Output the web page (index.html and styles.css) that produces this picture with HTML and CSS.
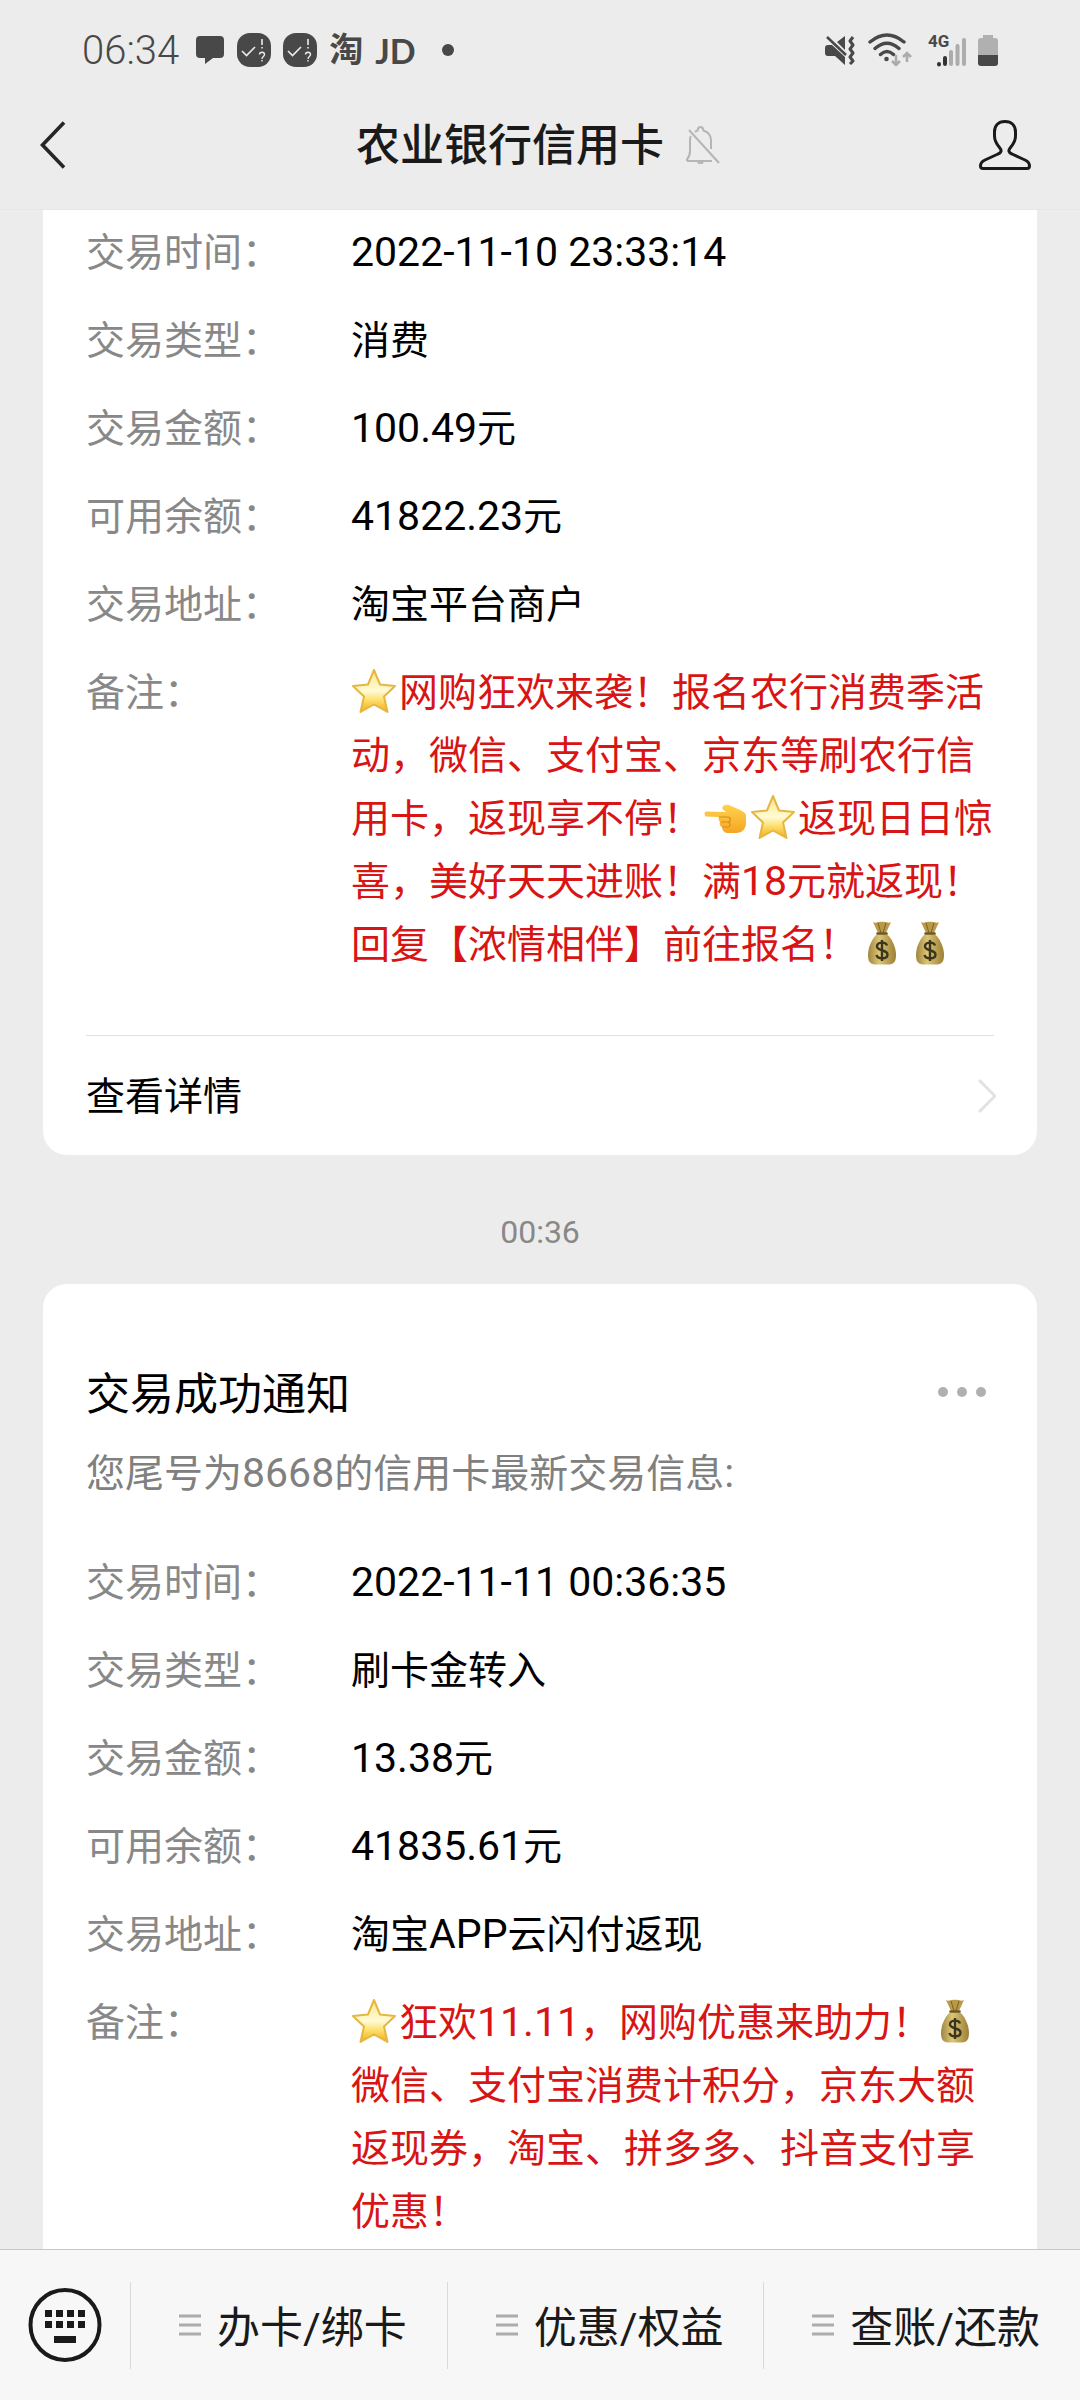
FILE: index.html
```html
<!DOCTYPE html>
<html lang="zh-CN">
<head>
<meta charset="utf-8">
<meta name="viewport" content="width=device-width, initial-scale=1">
<title>农业银行信用卡</title>
<link rel="stylesheet" href="styles.css">
</head>
<body>
<svg class="defs" aria-hidden="true">
  <defs>
    <linearGradient id="star-fill" x1="0" y1="0" x2="0" y2="1">
      <stop offset="0" stop-color="#fbe58a"/>
      <stop offset="0.5" stop-color="#fffbd6"/>
      <stop offset="0.7" stop-color="#fde272"/>
      <stop offset="1" stop-color="#f2ac1a"/>
    </linearGradient>
    <linearGradient id="hand-fill" x1="0" y1="0" x2="0" y2="1">
      <stop offset="0" stop-color="#ffd34f"/>
      <stop offset="1" stop-color="#f5a623"/>
    </linearGradient>
    <linearGradient id="bag-fill" x1="0" y1="0" x2="1" y2="0">
      <stop offset="0" stop-color="#a08542"/>
      <stop offset="0.4" stop-color="#dcc673"/>
      <stop offset="1" stop-color="#9c7f35"/>
    </linearGradient>
    <symbol id="star" viewBox="0 0 48 44">
      <path d="M23 1 29 15.500 44 17 33 27.500 36.500 43 23 35.500 9.500 43 13 27.500 2 17 17 15.500Z" fill="url(#star-fill)" stroke="#e6b740" stroke-width="2" stroke-linejoin="round"/>
    </symbol>
    <symbol id="hand" viewBox="0 0 48 44">
      <path d="M4 16.500C2 17 2 21 4.500 21.500L17 22C16 24 17 26 18 27 17 29 18 31.500 20 32 20 35 22 37.500 25 38H34C40 38 44 34 44 28V20C43 17 40 16 36 14L27 10C24 9 21 10 20 13 21 15 23 16 24 17Z" fill="url(#hand-fill)"/>
      <path d="M17 22H26C29 22 29 27 26 27H19M20 32H26C29 32 28 27 26 27" fill="none" stroke="#d98a1b" stroke-width="1.200"/>
    </symbol>
    <symbol id="bag" viewBox="0 0 48 44">
      <path d="M15 1C18 3 20 0 24 1 28 0 30 3 33 1L27.500 13H20.500Z" fill="#b89a4a"/>
      <path d="M20 2 23 12M28 2 25 12" stroke="#7c6118" stroke-width="1"/>
      <path d="M20.500 12H27.500C33 16 38 25 38 34 38 40 36 43.500 31 43.500H17C12 43.500 10 40 10 34 10 25 15 16 20.500 12Z" fill="url(#bag-fill)"/>
      <path d="M19.500 12.500H28.500" stroke="#6f5a25" stroke-width="2.500" stroke-linecap="round"/>
      <path d="M29 24.500C28 20.500 19 20.500 19 25.500 19 30 29.500 28.500 29.500 33.500 29.500 38.500 19.500 38.500 18.500 34M24 19V40" fill="none" stroke="#3b3420" stroke-width="2.400"/>
    </symbol>
    <symbol id="verify" viewBox="0 0 34 34">
      <rect width="34" height="34" rx="13" fill="#484848"/>
      <path d="M5 18 9.500 22.500 18 14M25 6V12M25 14V15.500" fill="none" stroke="#ececec" stroke-width="1.600"/>
      <path d="M22.500 21.500C22.500 18.500 27.500 18.500 27.500 21.500 27.500 23.500 25 23.500 25 26M25 27V28.500" fill="none" stroke="#ececec" stroke-width="1.400"/>
    </symbol>
    <symbol id="lines" viewBox="0 0 22 22">
      <path d="M0 2H22M0 11H22M0 20H22" stroke="#acacac" stroke-width="3"/>
    </symbol>
  </defs>
</svg>

<div class="screen">
  <div class="status-bar">
    <div class="status-left">
      <time class="clock">06:34</time>
      <svg width="30" height="30" viewBox="0 0 30 30" aria-hidden="true">
        <path d="M5 1H25Q29 1 29 5V19Q29 23 25 23H18L10 29V23H5Q1 23 1 19V5Q1 1 5 1Z" fill="#484848"/>
      </svg>
      <svg width="34" height="34" aria-hidden="true"><use href="#verify"/></svg>
      <svg width="34" height="34" aria-hidden="true"><use href="#verify"/></svg>
      <span class="app-tao">淘</span>
      <span class="app-jd">JD</span>
      <span class="more-dot"></span>
    </div>
    <div class="status-right">
      <svg width="30" height="30" viewBox="0 0 30 30" aria-hidden="true">
        <path d="M0 13Q0 10 3 10H7L20 22V30L10 21H3Q0 21 0 18ZM12 7 20 1V15Z" fill="#484848"/>
        <path d="M2 2 21 20" stroke="#484848" stroke-width="2.500"/>
        <path d="M28 2 25 6 28 10 25 14 28 18 25 22 28 26 25 29" fill="none" stroke="#484848" stroke-width="3" stroke-linejoin="round"/>
      </svg>
      <svg width="44" height="34" viewBox="0 0 44 34" aria-hidden="true">
        <path d="M2 9Q19-5 36 9M7 15.500Q19 5 31 15.500M12.500 21.500Q19 15.500 25.500 21.500" fill="none" stroke="#484848" stroke-width="3.400" stroke-linecap="round"/>
        <circle cx="18.500" cy="26" r="2.300" fill="#484848"/>
        <path d="M28 22V31M24 28 28 32 32 28M39 29V20M35 24 39 20 43 24" fill="none" stroke="#acacac" stroke-width="2.600"/>
      </svg>
      <svg class="icon-signal" width="40" height="34" viewBox="0 0 40 34" aria-hidden="true">
        <text x="3" y="14" class="net-label">4G</text>
        <path d="M14 31.500V31M20 31V25" stroke="#333" stroke-width="4" stroke-linecap="round"/>
        <path d="M26 31V19M32.500 31V13M39 31V7" stroke="#acacac" stroke-width="4" stroke-linecap="round"/>
      </svg>
      <svg width="20" height="34" viewBox="0 0 20 34" aria-hidden="true">
        <path d="M5 2H15V5H17Q20 5 20 8V22H0V8Q0 5 3 5H5Z" fill="#b0b0b0"/>
        <path d="M0 22H20V30Q20 33 17 33H3Q0 33 0 30Z" fill="#484848"/>
      </svg>
    </div>
  </div>

  <header class="title-bar">
    <button type="button" aria-label="返回">
      <svg width="28" height="48" viewBox="0 0 28 48"><path d="M24 1.500 2.500 24 24 46.500" fill="none" stroke="#262626" stroke-width="3.600"/></svg>
    </button>
    <div class="title-group">
      <h1 class="title">农业银行信用卡</h1>
      <svg width="34" height="38" viewBox="0 0 34 38" aria-hidden="true">
        <path d="M1 35V33.500Q4 30 4 25V14Q4 11.500 5 10M9 6Q10 5 11.500 4.500 12 1 14.500 1 17 1 17.500 4.500 25 7 25 14V23M26 35H1M12 36Q14.500 39 17 36M3 4 33 37" fill="none" stroke="#b5b5b5" stroke-width="2"/>
      </svg>
    </div>
    <button type="button" aria-label="公众号资料">
      <svg width="54" height="52" viewBox="0 0 54 52"><path d="M27 2.500C20 2.500 16.500 7 16.500 13V17C16.500 22 18.500 25 21.500 28.500 24 31.500 23.500 33.500 20 35L7 41Q2.500 43 2.500 47 2.500 49.500 5 49.500H49Q51.500 49.500 51.500 47 51.500 43 47 41L34 35C30.500 33.500 30 31.500 32.500 28.500 35.500 25 37.500 22 37.500 17V13C37.500 7 34 2.500 27 2.500Z" fill="none" stroke="#1a1a1a" stroke-width="3"/></svg>
    </button>
  </header>

  <main class="chat">
    <article class="card card-cut">
      <dl class="fields">
        <dt>交易时间：</dt><dd><span class="latin">2022-11-10 23:33:14</span></dd>
        <dt>交易类型：</dt><dd>消费</dd>
        <dt>交易金额：</dt><dd><span class="latin">100.49</span>元</dd>
        <dt>可用余额：</dt><dd><span class="latin">41822.23</span>元</dd>
        <dt>交易地址：</dt><dd>淘宝平台商户</dd>
        <dt>备注：</dt>
        <dd class="remark"><svg class="emoji" role="img" aria-label="星星"><use href="#star"/></svg>网购狂欢来袭！报名农行消费季活动，微信、支付宝、京东等刷农行信用卡，返现享不停！<svg class="emoji" role="img" aria-label="向左指"><use href="#hand"/></svg><svg class="emoji" role="img" aria-label="星星"><use href="#star"/></svg>返现日日惊喜，美好天天进账！满<span class="latin">18</span>元就返现！回复【浓情相伴】前往报名！<svg class="emoji" role="img" aria-label="钱袋"><use href="#bag"/></svg><svg class="emoji" role="img" aria-label="钱袋"><use href="#bag"/></svg></dd>
      </dl>
      <a class="detail-link" href="#detail">
        <span>查看详情</span>
        <svg width="20" height="36" viewBox="0 0 20 36" aria-hidden="true"><path d="M3 2 19 18 3 34" fill="none" stroke="#e2e2e2" stroke-width="3"/></svg>
      </a>
    </article>

    <time class="timestamp">00:36</time>

    <article class="card">
      <div class="card-head">
        <h2 class="card-title">交易成功通知</h2>
        <button class="more-button" type="button" aria-label="更多">
          <svg width="50" height="12" viewBox="0 0 50 12"><g fill="#b0b0b0"><circle cx="6" cy="6" r="5"/><circle cx="25" cy="6" r="5"/><circle cx="44" cy="6" r="5"/></g></svg>
        </button>
      </div>
      <p class="card-intro">您尾号为<span class="latin">8668</span>的信用卡最新交易信息<span class="latin">:</span></p>
      <dl class="fields">
        <dt>交易时间：</dt><dd><span class="latin">2022-11-11 00:36:35</span></dd>
        <dt>交易类型：</dt><dd>刷卡金转入</dd>
        <dt>交易金额：</dt><dd><span class="latin">13.38</span>元</dd>
        <dt>可用余额：</dt><dd><span class="latin">41835.61</span>元</dd>
        <dt>交易地址：</dt><dd>淘宝<span class="latin">APP</span>云闪付返现</dd>
        <dt>备注：</dt>
        <dd class="remark"><svg class="emoji" role="img" aria-label="星星"><use href="#star"/></svg>狂欢<span class="latin">11.11</span>，网购优惠来助力！<svg class="emoji" role="img" aria-label="钱袋"><use href="#bag"/></svg>微信、支付宝消费计积分，京东大额返现券，淘宝、拼多多、抖音支付享优惠！</dd>
      </dl>
    </article>
  </main>

  <nav class="menu-bar">
    <button class="keyboard-button" type="button" aria-label="键盘">
      <svg width="74" height="76" viewBox="0 0 74 76">
        <ellipse cx="37" cy="38" rx="34.500" ry="35" fill="none" stroke="#1a1a1a" stroke-width="4"/>
        <path d="M17 23h7v7h-7zM28 23h7v7h-7zM39 23h7v7h-7zM50 23h7v7h-7zM17 34h7v7h-7zM28 34h7v7h-7zM39 34h7v7h-7zM50 34h7v7h-7zM26 49h22v7h-22z" fill="#1a1a1a"/>
      </svg>
    </button>
    <button class="menu-item" type="button"><svg width="22" height="22" aria-hidden="true"><use href="#lines"/></svg><span>办卡/绑卡</span></button>
    <button class="menu-item" type="button"><svg width="22" height="22" aria-hidden="true"><use href="#lines"/></svg><span>优惠/权益</span></button>
    <button class="menu-item" type="button"><svg width="22" height="22" aria-hidden="true"><use href="#lines"/></svg><span>查账/还款</span></button>
  </nav>
</div>
</body>
</html>
```
FILE: styles.css
```css
* {
  box-sizing: border-box;
}

body {
  margin: 0;
  background: #ececec;
  color: #000;
  font-family: Roboto, "Noto Sans CJK SC", sans-serif;
  font-size: 39px;
  line-height: 63px;
}

h1, h2, p, dl, dd {
  margin: 0;
  font-weight: 400;
}

button {
  padding: 0;
  border: 0;
  background: none;
  color: inherit;
  font: inherit;
}

svg {
  display: block;
  flex: none;
}

.defs {
  position: absolute;
  width: 0;
  height: 0;
}

/* Digits and Latin letters run slightly larger than the Chinese text */
.latin {
  font-size: 41px;
  line-height: 1;
}

.screen {
  display: flex;
  flex-direction: column;
  height: 100vh;
}

/* Status bar */
.status-bar {
  display: flex;
  justify-content: space-between;
  align-items: center;
  height: 100px;
  padding: 0 82px;
  color: #484848;
}

.status-left,
.status-right {
  display: flex;
  align-items: center;
}

.status-left {
  gap: 12px;
}

.status-right {
  gap: 13px;
}

.clock {
  margin-right: 4px;
  font-size: 40px;
  font-weight: 300;
}

.app-tao {
  font-size: 34px;
  font-weight: 700;
}

.app-jd {
  font-family: Lato, sans-serif;
  font-size: 34px;
  font-weight: 700;
}

.more-dot {
  width: 12px;
  height: 12px;
  margin-left: 14px;
  border-radius: 50%;
  background: #484848;
}

.icon-signal {
  overflow: visible;
}

.net-label {
  fill: #484848;
  font-size: 17px;
  font-weight: 700;
}

/* Title bar */
.title-bar {
  display: flex;
  justify-content: space-between;
  align-items: center;
  height: 110px;
  padding: 0 48px 20px 40px;
  border-bottom: 1px solid #e6e6e6;
}

.title-group {
  display: flex;
  align-items: center;
  gap: 22px;
  margin-left: 30px;
}

.title {
  padding-top: 4px;
  color: #1a1a1a;
  font-size: 44px;
  font-weight: 500;
}

/* Messages */
.chat {
  flex: 1;
  min-height: 0;
  overflow: hidden;
  padding: 0 43px;
}

.card {
  padding: 80px 43px;
  border-radius: 24px;
  background: #fff;
}

.card-cut {
  padding: 12px 43px 0;
  border-radius: 0 0 24px 24px;
}

.fields {
  display: grid;
  grid-template-columns: 265px 1fr;
  row-gap: 25px;
}

.fields dt {
  color: #888;
}

.remark {
  color: #d81414;
}

.emoji {
  display: inline-block;
  width: 48px;
  height: 44px;
  vertical-align: -7px;
}

.detail-link {
  display: flex;
  justify-content: space-between;
  align-items: center;
  height: 120px;
  margin-top: 58px;
  border-top: 1px solid #e0e0e0;
  color: inherit;
  text-decoration: none;
}

.detail-link span {
  padding-top: 4px;
}

.detail-link svg {
  margin-right: -2px;
}

.timestamp {
  display: block;
  padding: 46px 0 20px;
  color: #888;
  font-size: 32px;
  text-align: center;
}

.card-head {
  display: flex;
  justify-content: space-between;
  align-items: center;
  padding-right: 7px;
}

.card-title {
  font-size: 44px;
}

.more-button {
  padding-bottom: 8px;
}

.card-intro {
  margin: 16px 0 46px;
  color: #808080;
}

/* Bottom menu */
.menu-bar {
  display: flex;
  align-items: center;
  height: 151px;
  border-top: 1px solid #c8c8c8;
  background: #f7f7f7;
}

.keyboard-button {
  flex: none;
  padding: 0 28px;
}

.menu-item {
  display: flex;
  flex: 1;
  align-items: center;
  gap: 16px;
  height: 87px;
  padding-left: 48px;
  border-left: 1px solid #d9d9d9;
  color: #1a1a1a;
  font-size: 43px;
}

.menu-item span {
  padding-top: 6px;
}
```
